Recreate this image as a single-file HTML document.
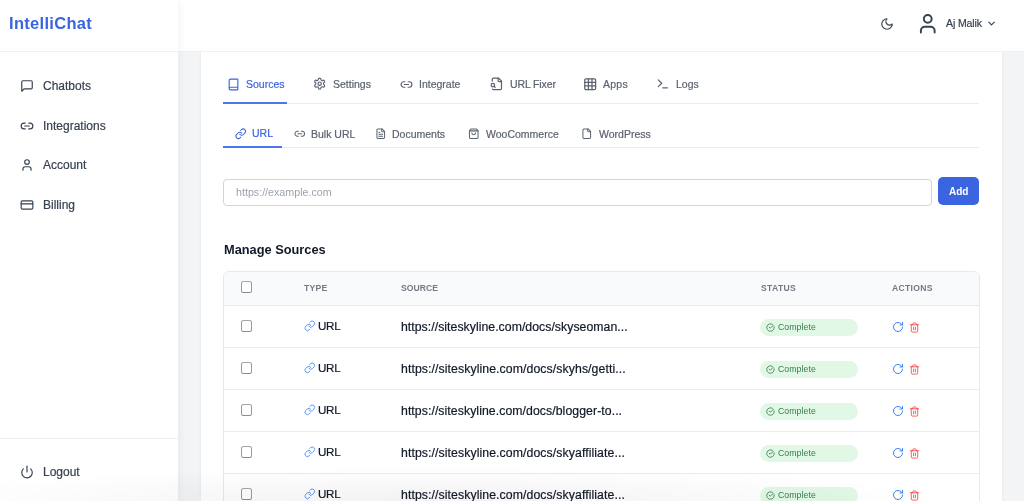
<!DOCTYPE html><html><head><meta charset="utf-8"><style>
*{box-sizing:border-box;margin:0;padding:0}
html,body{width:1024px;height:501px;overflow:hidden;font-family:"Liberation Sans",sans-serif;background:#f3f4f6;color:#374151;position:relative}
.t{position:absolute;white-space:nowrap;line-height:1.2;will-change:transform}
.ic{position:absolute;overflow:visible}
.hl{position:absolute;height:1px;background:#eaebee}
.bar{position:absolute;height:2px;background:#4d77e8}
#sidebar{position:absolute;left:0;top:0;width:178px;height:501px;background:#fff;box-shadow:2px 0 8px rgba(0,0,0,0.045);z-index:3}
#sidebar .hl{background:#eff0f2}
#header{position:absolute;left:178px;top:0;width:846px;height:52px;background:#fff;border-bottom:1px solid #eff0f3;z-index:2}
#header ~ *{z-index:4}
#card{position:absolute;left:201px;top:52px;width:801px;height:460px;background:#fff;box-shadow:0 0 3px rgba(0,0,0,0.07);z-index:1 !important}
#inp{position:absolute;left:223px;top:179px;width:709px;height:27px;border:1px solid #d1d5db;border-radius:4px;background:#fff}
#add{position:absolute;left:938px;top:177px;width:41px;height:28px;border-radius:5px;background:#3a64e0}
#tbl{position:absolute;left:223px;top:271px;width:757px;height:260px;border:1px solid #e8e9eb;border-radius:6px;background:#fff}
#thead{position:absolute;left:224px;top:272px;width:755px;height:33px;background:#f9fafb;border-radius:5px 5px 0 0}
.cb{position:absolute;width:11px;height:11.6px;border:1px solid #999a9c;border-bottom-color:#8a8b8d;border-top-color:#a5a6a8;border-radius:2.5px;background:#fff}
.badge{position:absolute;width:97.5px;height:17px;border-radius:9px;background:#e0f8e5}
#fade{position:absolute;left:0;top:461px;width:1024px;height:40px;background:radial-gradient(ellipse 520px 34px at 430px 100%,rgba(0,0,0,0.05),rgba(0,0,0,0));z-index:10 !important}
</style></head><body>
<div id="sidebar">
<div class="t" style="left:9.3px;top:15px;font-size:16.5px;line-height:16.5px;color:#3a64e0;font-weight:700;letter-spacing:0.3px;">IntelliChat</div>
<div class="hl" style="left:0;top:51px;width:178px"></div>
<svg class="ic" style="left:20px;top:79px;width:14px;height:14px" viewBox="0 0 24 24" fill="none" stroke="#374151" stroke-width="2" stroke-linecap="round" stroke-linejoin="round"><path d="M21 15a2 2 0 0 1-2 2H7l-4 4V5a2 2 0 0 1 2-2h14a2 2 0 0 1 2 2z"/></svg>
<div class="t" style="left:42.5px;top:80px;font-size:12px;line-height:12px;color:#374151;font-weight:400;letter-spacing:0px;-webkit-text-stroke:0.2px currentColor;">Chatbots</div>
<svg class="ic" style="left:20px;top:118.5px;width:14px;height:14px" viewBox="0 0 24 24" fill="none" stroke="#374151" stroke-width="2" stroke-linecap="round" stroke-linejoin="round"><path d="M9 17H7A5 5 0 0 1 7 7h2"/><path d="M15 7h2a5 5 0 1 1 0 10h-2"/><line x1="8" x2="16" y1="12" y2="12"/></svg>
<div class="t" style="left:42.5px;top:120px;font-size:12px;line-height:12px;color:#374151;font-weight:400;letter-spacing:0px;-webkit-text-stroke:0.2px currentColor;">Integrations</div>
<svg class="ic" style="left:20px;top:158px;width:14px;height:14px" viewBox="0 0 24 24" fill="none" stroke="#374151" stroke-width="2" stroke-linecap="round" stroke-linejoin="round"><path d="M19 21v-2a4 4 0 0 0-4-4H9a4 4 0 0 0-4 4v2"/><circle cx="12" cy="7" r="4"/></svg>
<div class="t" style="left:42.5px;top:159px;font-size:12px;line-height:12px;color:#374151;font-weight:400;letter-spacing:0px;-webkit-text-stroke:0.2px currentColor;">Account</div>
<svg class="ic" style="left:20px;top:197.5px;width:14px;height:14px" viewBox="0 0 24 24" fill="none" stroke="#374151" stroke-width="2" stroke-linecap="round" stroke-linejoin="round"><rect width="20" height="14" x="2" y="5" rx="2"/><line x1="2" x2="22" y1="10" y2="10"/></svg>
<div class="t" style="left:42.5px;top:199px;font-size:12px;line-height:12px;color:#374151;font-weight:400;letter-spacing:0px;-webkit-text-stroke:0.2px currentColor;">Billing</div>
<div class="hl" style="left:0;top:438px;width:178px"></div>
<svg class="ic" style="left:20px;top:465px;width:14px;height:14px" viewBox="0 0 24 24" fill="none" stroke="#374151" stroke-width="2" stroke-linecap="round" stroke-linejoin="round"><path d="M12 2v10"/><path d="M18.4 6.6a9 9 0 1 1-12.77.04"/></svg>
<div class="t" style="left:42.5px;top:466px;font-size:12px;line-height:12px;color:#374151;font-weight:400;letter-spacing:0px;-webkit-text-stroke:0.2px currentColor;">Logout</div>
</div>
<div id="header"></div>
<svg class="ic" style="left:880px;top:16.5px;width:14px;height:14px" viewBox="0 0 24 24" fill="none" stroke="#374151" stroke-width="2" stroke-linecap="round" stroke-linejoin="round"><path d="M12 3a6 6 0 0 0 9 9 9 9 0 1 1-9-9Z"/></svg>
<svg class="ic" style="left:916px;top:12.3px;width:23.5px;height:23.5px" viewBox="0 0 24 24" fill="none" stroke="#374151" stroke-width="2" stroke-linecap="round" stroke-linejoin="round"><path d="M19 21v-2a4 4 0 0 0-4-4H9a4 4 0 0 0-4 4v2"/><circle cx="12" cy="7" r="4"/></svg>
<div class="t" style="left:945.5px;top:18px;font-size:10.5px;line-height:10.5px;color:#374151;font-weight:400;letter-spacing:-0.12px;-webkit-text-stroke:0.2px currentColor;">Aj Malik</div>
<svg class="ic" style="left:985.5px;top:18px;width:11px;height:11px" viewBox="0 0 24 24" fill="none" stroke="#374151" stroke-width="2.5" stroke-linecap="round" stroke-linejoin="round"><path d="m6 9 6 6 6-6"/></svg>
<div id="card"></div>
<svg class="ic" style="left:226.5px;top:77.5px;width:13px;height:13px" viewBox="0 0 24 24" fill="none" stroke="#3a64e0" stroke-width="2.1" stroke-linecap="round" stroke-linejoin="round"><path d="M4 19.5v-15A2.5 2.5 0 0 1 6.5 2H19a1 1 0 0 1 1 1v18a1 1 0 0 1-1 1H6.5a1 1 0 0 1 0-5H20"/></svg>
<div class="t" style="left:246px;top:79px;font-size:10.5px;line-height:10.5px;color:#3a64e0;font-weight:400;letter-spacing:0px;-webkit-text-stroke:0.2px currentColor;">Sources</div>
<svg class="ic" style="left:313.2px;top:77.2px;width:13.3px;height:13.3px" viewBox="0 0 24 24" fill="none" stroke="#5b6270" stroke-width="2.1" stroke-linecap="round" stroke-linejoin="round"><path d="M12.22 2h-.44a2 2 0 0 0-2 2v.18a2 2 0 0 1-1 1.73l-.43.25a2 2 0 0 1-2 0l-.15-.08a2 2 0 0 0-2.73.73l-.22.38a2 2 0 0 0 .73 2.73l.15.1a2 2 0 0 1 1 1.72v.51a2 2 0 0 1-1 1.74l-.15.09a2 2 0 0 0-.73 2.730l.22.38a2 2 0 0 0 2.73.73l.15-.08a2 2 0 0 1 2 0l.43.25a2 2 0 0 1 1 1.73V20a2 2 0 0 0 2 2h.44a2 2 0 0 0 2-2v-.18a2 2 0 0 1 1-1.73l.43-.25a2 2 0 0 1 2 0l.15.08a2 2 0 0 0 2.73-.73l.22-.39a2 2 0 0 0-.73-2.73l-.15-.08a2 2 0 0 1-1-1.74v-.5a2 2 0 0 1 1-1.74l.15-.09a2 2 0 0 0 .73-2.73l-.22-.38a2 2 0 0 0-2.73-.73l-.15.08a2 2 0 0 1-2 0l-.43-.25a2 2 0 0 1-1-1.73V4a2 2 0 0 0-2-2z"/><circle cx="12" cy="12" r="3"/></svg>
<div class="t" style="left:332.5px;top:79px;font-size:10.5px;line-height:10.5px;color:#5b6270;font-weight:400;letter-spacing:0px;-webkit-text-stroke:0.2px currentColor;">Settings</div>
<svg class="ic" style="left:400px;top:77.6px;width:13px;height:13px" viewBox="0 0 24 24" fill="none" stroke="#5b6270" stroke-width="2.1" stroke-linecap="round" stroke-linejoin="round"><path d="M9 17H7A5 5 0 0 1 7 7h2"/><path d="M15 7h2a5 5 0 1 1 0 10h-2"/><line x1="8" x2="16" y1="12" y2="12"/></svg>
<div class="t" style="left:419px;top:79px;font-size:10.5px;line-height:10.5px;color:#5b6270;font-weight:400;letter-spacing:0px;-webkit-text-stroke:0.2px currentColor;">Integrate</div>
<svg class="ic" style="left:489.8px;top:77px;width:13.8px;height:13.8px" viewBox="0 0 24 24" fill="none" stroke="#5b6270" stroke-width="2.1" stroke-linecap="round" stroke-linejoin="round"><path d="M14 2v4a2 2 0 0 0 2 2h4"/><path d="M4.268 21a2 2 0 0 0 1.727 1H18a2 2 0 0 0 2-2V7l-5-5H6a2 2 0 0 0-2 2v3"/><path d="m9 18-1.5-1.5"/><circle cx="5" cy="14" r="3"/></svg>
<div class="t" style="left:510px;top:79px;font-size:10.5px;line-height:10.5px;color:#5b6270;font-weight:400;letter-spacing:-0.12px;-webkit-text-stroke:0.2px currentColor;">URL Fixer</div>
<svg class="ic" style="left:582.9px;top:76.9px;width:14.4px;height:14.4px" viewBox="0 0 24 24" fill="none" stroke="#5b6270" stroke-width="2.1" stroke-linecap="round" stroke-linejoin="round"><rect width="18" height="18" x="3" y="3" rx="2"/><path d="M3 9h18"/><path d="M3 15h18"/><path d="M9 3v18"/><path d="M15 3v18"/></svg>
<div class="t" style="left:603px;top:79px;font-size:10.5px;line-height:10.5px;color:#5b6270;font-weight:400;letter-spacing:0.25px;-webkit-text-stroke:0.2px currentColor;">Apps</div>
<svg class="ic" style="left:655.8px;top:77.3px;width:13.7px;height:13.7px" viewBox="0 0 24 24" fill="none" stroke="#5b6270" stroke-width="2.1" stroke-linecap="round" stroke-linejoin="round"><polyline points="4 17 10 11 4 5"/><line x1="12" x2="20" y1="19" y2="19"/></svg>
<div class="t" style="left:676px;top:79px;font-size:10.5px;line-height:10.5px;color:#5b6270;font-weight:400;letter-spacing:0px;-webkit-text-stroke:0.2px currentColor;">Logs</div>
<div class="hl" style="left:223px;top:103px;width:756px"></div>
<div class="bar" style="left:223px;top:101.5px;width:64px"></div>
<svg class="ic" style="left:234.5px;top:127.5px;width:11.5px;height:11.5px" viewBox="0 0 24 24" fill="none" stroke="#3a64e0" stroke-width="2.1" stroke-linecap="round" stroke-linejoin="round"><path d="M10 13a5 5 0 0 0 7.54.54l3-3a5 5 0 0 0-7.07-7.07l-1.72 1.71"/><path d="M14 11a5 5 0 0 0-7.54-.54l-3 3a5 5 0 0 0 7.07 7.07l1.71-1.71"/></svg>
<div class="t" style="left:251.5px;top:128px;font-size:10.5px;line-height:10.5px;color:#3a64e0;font-weight:400;letter-spacing:0px;-webkit-text-stroke:0.2px currentColor;">URL</div>
<svg class="ic" style="left:293.7px;top:128.2px;width:11.5px;height:11.5px" viewBox="0 0 24 24" fill="none" stroke="#5b6270" stroke-width="2.1" stroke-linecap="round" stroke-linejoin="round"><path d="M9 17H7A5 5 0 0 1 7 7h2"/><path d="M15 7h2a5 5 0 1 1 0 10h-2"/><line x1="8" x2="16" y1="12" y2="12"/></svg>
<div class="t" style="left:310.5px;top:129px;font-size:10.5px;line-height:10.5px;color:#5b6270;font-weight:400;letter-spacing:0px;-webkit-text-stroke:0.2px currentColor;">Bulk URL</div>
<svg class="ic" style="left:375px;top:128px;width:11.5px;height:11.5px" viewBox="0 0 24 24" fill="none" stroke="#5b6270" stroke-width="2.1" stroke-linecap="round" stroke-linejoin="round"><path d="M15 2H6a2 2 0 0 0-2 2v16a2 2 0 0 0 2 2h12a2 2 0 0 0 2-2V7Z"/><path d="M14 2v4a2 2 0 0 0 2 2h4"/><path d="M10 9H8"/><path d="M16 13H8"/><path d="M16 17H8"/></svg>
<div class="t" style="left:392px;top:129px;font-size:10.5px;line-height:10.5px;color:#5b6270;font-weight:400;letter-spacing:0px;-webkit-text-stroke:0.2px currentColor;">Documents</div>
<svg class="ic" style="left:468px;top:128.2px;width:11.5px;height:11.5px" viewBox="0 0 24 24" fill="none" stroke="#5b6270" stroke-width="2.1" stroke-linecap="round" stroke-linejoin="round"><path d="M6 2 3 6v14a2 2 0 0 0 2 2h14a2 2 0 0 0 2-2V6l-3-4Z"/><path d="M3 6h18"/><path d="M16 10a4 4 0 0 1-8 0"/></svg>
<div class="t" style="left:486px;top:129px;font-size:10.5px;line-height:10.5px;color:#5b6270;font-weight:400;letter-spacing:0px;-webkit-text-stroke:0.2px currentColor;">WooCommerce</div>
<svg class="ic" style="left:580.8px;top:128px;width:11.5px;height:11.5px" viewBox="0 0 24 24" fill="none" stroke="#5b6270" stroke-width="2.1" stroke-linecap="round" stroke-linejoin="round"><path d="M15 2H6a2 2 0 0 0-2 2v16a2 2 0 0 0 2 2h12a2 2 0 0 0 2-2V7Z"/><path d="M14 2v4a2 2 0 0 0 2 2h4"/></svg>
<div class="t" style="left:598.5px;top:129px;font-size:10.5px;line-height:10.5px;color:#5b6270;font-weight:400;letter-spacing:0px;-webkit-text-stroke:0.2px currentColor;">WordPress</div>
<div class="hl" style="left:223px;top:147px;width:756px"></div>
<div class="bar" style="left:223px;top:145.5px;width:59px"></div>
<div id="inp"></div>
<div class="t" style="left:235.5px;top:187px;font-size:10.7px;line-height:10.7px;color:#9ca3af;font-weight:400;letter-spacing:0px;">https://example.com</div>
<div id="add"></div>
<div class="t" style="left:949px;top:187px;font-size:10px;line-height:10px;color:#ffffff;font-weight:700;letter-spacing:0px;">Add</div>
<div class="t" style="left:223.5px;top:244px;font-size:12.8px;line-height:12.8px;color:#111827;font-weight:700;letter-spacing:0px;">Manage Sources</div>
<div id="tbl"></div>
<div id="thead"></div>
<div class="cb" style="left:241px;top:281px"></div>
<div class="t" style="left:304px;top:284px;font-size:8.6px;line-height:8.6px;color:#737985;font-weight:700;letter-spacing:0.25px;">TYPE</div>
<div class="t" style="left:401px;top:284px;font-size:8.6px;line-height:8.6px;color:#737985;font-weight:700;letter-spacing:0.05px;">SOURCE</div>
<div class="t" style="left:760.5px;top:284px;font-size:8.6px;line-height:8.6px;color:#737985;font-weight:700;letter-spacing:0.35px;">STATUS</div>
<div class="t" style="left:892px;top:284px;font-size:8.6px;line-height:8.6px;color:#737985;font-weight:700;letter-spacing:0.3px;">ACTIONS</div>
<div class="hl" style="left:224px;top:305px;width:755px"></div>
<div class="cb" style="left:241px;top:320.20px"></div>
<svg class="ic" style="left:303.6px;top:319.79999999999995px;width:11.6px;height:11.6px" viewBox="0 0 24 24" fill="none" stroke="#3b82f6" stroke-width="1.7" stroke-linecap="round" stroke-linejoin="round"><path d="M10 13a5 5 0 0 0 7.54.54l3-3a5 5 0 0 0-7.07-7.07l-1.72 1.71"/><path d="M14 11a5 5 0 0 0-7.54-.54l-3 3a5 5 0 0 0 7.07 7.07l1.71-1.71"/></svg>
<div class="t" style="left:318px;top:320px;font-size:11.6px;line-height:11.6px;color:#111827;font-weight:400;letter-spacing:-0.3px;-webkit-text-stroke:0.2px currentColor;">URL</div>
<div class="t" style="left:401px;top:321px;font-size:12.27px;line-height:12.27px;color:#111827;font-weight:400;letter-spacing:0.04px;-webkit-text-stroke:0.2px currentColor;">https://siteskyline.com/docs/skyseoman...</div>
<div class="badge" style="left:760px;top:318.60px"></div>
<svg class="ic" style="left:765.5px;top:323.4px;width:9px;height:9px" viewBox="0 0 24 24" fill="none" stroke="#3d7a50" stroke-width="2.2" stroke-linecap="round" stroke-linejoin="round"><path d="M21.801 10A10 10 0 1 1 17 3.335"/><path d="m8.5 11 3 3 8-8"/></svg>
<div class="t" style="left:777.5px;top:323px;font-size:8.75px;line-height:8.75px;color:#3a7a4e;font-weight:400;letter-spacing:0.05px;">Complete</div>
<svg class="ic" style="left:891.5px;top:321.4px;width:12px;height:12px" viewBox="0 0 24 24" fill="none" stroke="#3b82f6" stroke-width="2" stroke-linecap="round" stroke-linejoin="round"><path d="M21 12a9 9 0 1 1-9-9c2.52 0 4.93 1 6.74 2.74L21 8"/><path d="M21 3v5h-5"/></svg>
<svg class="ic" style="left:909px;top:322.4px;width:11px;height:11px" viewBox="0 0 24 24" fill="none" stroke="#ef4444" stroke-width="1.8" stroke-linecap="round" stroke-linejoin="round"><path d="M3 6h18"/><path d="M19 6v14c0 1-1 2-2 2H7c-1 0-2-1-2-2V6"/><path d="M8 6V4c0-1 1-2 2-2h4c1 0 2 1 2 2v2"/><line x1="10" x2="10" y1="11" y2="17"/><line x1="14" x2="14" y1="11" y2="17"/></svg>
<div class="hl" style="left:224px;top:347px;width:755px"></div>
<div class="cb" style="left:241px;top:362.20px"></div>
<svg class="ic" style="left:303.6px;top:361.79999999999995px;width:11.6px;height:11.6px" viewBox="0 0 24 24" fill="none" stroke="#3b82f6" stroke-width="1.7" stroke-linecap="round" stroke-linejoin="round"><path d="M10 13a5 5 0 0 0 7.54.54l3-3a5 5 0 0 0-7.07-7.07l-1.72 1.71"/><path d="M14 11a5 5 0 0 0-7.54-.54l-3 3a5 5 0 0 0 7.07 7.07l1.71-1.71"/></svg>
<div class="t" style="left:318px;top:362px;font-size:11.6px;line-height:11.6px;color:#111827;font-weight:400;letter-spacing:-0.3px;-webkit-text-stroke:0.2px currentColor;">URL</div>
<div class="t" style="left:401px;top:363px;font-size:12.27px;line-height:12.27px;color:#111827;font-weight:400;letter-spacing:0.09px;-webkit-text-stroke:0.2px currentColor;">https://siteskyline.com/docs/skyhs/getti...</div>
<div class="badge" style="left:760px;top:360.60px"></div>
<svg class="ic" style="left:765.5px;top:365.4px;width:9px;height:9px" viewBox="0 0 24 24" fill="none" stroke="#3d7a50" stroke-width="2.2" stroke-linecap="round" stroke-linejoin="round"><path d="M21.801 10A10 10 0 1 1 17 3.335"/><path d="m8.5 11 3 3 8-8"/></svg>
<div class="t" style="left:777.5px;top:365px;font-size:8.75px;line-height:8.75px;color:#3a7a4e;font-weight:400;letter-spacing:0.05px;">Complete</div>
<svg class="ic" style="left:891.5px;top:363.4px;width:12px;height:12px" viewBox="0 0 24 24" fill="none" stroke="#3b82f6" stroke-width="2" stroke-linecap="round" stroke-linejoin="round"><path d="M21 12a9 9 0 1 1-9-9c2.52 0 4.93 1 6.74 2.74L21 8"/><path d="M21 3v5h-5"/></svg>
<svg class="ic" style="left:909px;top:364.4px;width:11px;height:11px" viewBox="0 0 24 24" fill="none" stroke="#ef4444" stroke-width="1.8" stroke-linecap="round" stroke-linejoin="round"><path d="M3 6h18"/><path d="M19 6v14c0 1-1 2-2 2H7c-1 0-2-1-2-2V6"/><path d="M8 6V4c0-1 1-2 2-2h4c1 0 2 1 2 2v2"/><line x1="10" x2="10" y1="11" y2="17"/><line x1="14" x2="14" y1="11" y2="17"/></svg>
<div class="hl" style="left:224px;top:389px;width:755px"></div>
<div class="cb" style="left:241px;top:404.20px"></div>
<svg class="ic" style="left:303.6px;top:403.79999999999995px;width:11.6px;height:11.6px" viewBox="0 0 24 24" fill="none" stroke="#3b82f6" stroke-width="1.7" stroke-linecap="round" stroke-linejoin="round"><path d="M10 13a5 5 0 0 0 7.54.54l3-3a5 5 0 0 0-7.07-7.07l-1.72 1.71"/><path d="M14 11a5 5 0 0 0-7.54-.54l-3 3a5 5 0 0 0 7.07 7.07l1.71-1.71"/></svg>
<div class="t" style="left:318px;top:404px;font-size:11.6px;line-height:11.6px;color:#111827;font-weight:400;letter-spacing:-0.3px;-webkit-text-stroke:0.2px currentColor;">URL</div>
<div class="t" style="left:401px;top:405px;font-size:12.27px;line-height:12.27px;color:#111827;font-weight:400;letter-spacing:0.07px;-webkit-text-stroke:0.2px currentColor;">https://siteskyline.com/docs/blogger-to...</div>
<div class="badge" style="left:760px;top:402.60px"></div>
<svg class="ic" style="left:765.5px;top:407.4px;width:9px;height:9px" viewBox="0 0 24 24" fill="none" stroke="#3d7a50" stroke-width="2.2" stroke-linecap="round" stroke-linejoin="round"><path d="M21.801 10A10 10 0 1 1 17 3.335"/><path d="m8.5 11 3 3 8-8"/></svg>
<div class="t" style="left:777.5px;top:407px;font-size:8.75px;line-height:8.75px;color:#3a7a4e;font-weight:400;letter-spacing:0.05px;">Complete</div>
<svg class="ic" style="left:891.5px;top:405.4px;width:12px;height:12px" viewBox="0 0 24 24" fill="none" stroke="#3b82f6" stroke-width="2" stroke-linecap="round" stroke-linejoin="round"><path d="M21 12a9 9 0 1 1-9-9c2.52 0 4.93 1 6.74 2.74L21 8"/><path d="M21 3v5h-5"/></svg>
<svg class="ic" style="left:909px;top:406.4px;width:11px;height:11px" viewBox="0 0 24 24" fill="none" stroke="#ef4444" stroke-width="1.8" stroke-linecap="round" stroke-linejoin="round"><path d="M3 6h18"/><path d="M19 6v14c0 1-1 2-2 2H7c-1 0-2-1-2-2V6"/><path d="M8 6V4c0-1 1-2 2-2h4c1 0 2 1 2 2v2"/><line x1="10" x2="10" y1="11" y2="17"/><line x1="14" x2="14" y1="11" y2="17"/></svg>
<div class="hl" style="left:224px;top:431px;width:755px"></div>
<div class="cb" style="left:241px;top:446.20px"></div>
<svg class="ic" style="left:303.6px;top:445.79999999999995px;width:11.6px;height:11.6px" viewBox="0 0 24 24" fill="none" stroke="#3b82f6" stroke-width="1.7" stroke-linecap="round" stroke-linejoin="round"><path d="M10 13a5 5 0 0 0 7.54.54l3-3a5 5 0 0 0-7.07-7.07l-1.72 1.71"/><path d="M14 11a5 5 0 0 0-7.54-.54l-3 3a5 5 0 0 0 7.07 7.07l1.71-1.71"/></svg>
<div class="t" style="left:318px;top:446px;font-size:11.6px;line-height:11.6px;color:#111827;font-weight:400;letter-spacing:-0.3px;-webkit-text-stroke:0.2px currentColor;">URL</div>
<div class="t" style="left:401px;top:447px;font-size:12.27px;line-height:12.27px;color:#111827;font-weight:400;letter-spacing:0.09px;-webkit-text-stroke:0.2px currentColor;">https://siteskyline.com/docs/skyaffiliate...</div>
<div class="badge" style="left:760px;top:444.60px"></div>
<svg class="ic" style="left:765.5px;top:449.4px;width:9px;height:9px" viewBox="0 0 24 24" fill="none" stroke="#3d7a50" stroke-width="2.2" stroke-linecap="round" stroke-linejoin="round"><path d="M21.801 10A10 10 0 1 1 17 3.335"/><path d="m8.5 11 3 3 8-8"/></svg>
<div class="t" style="left:777.5px;top:449px;font-size:8.75px;line-height:8.75px;color:#3a7a4e;font-weight:400;letter-spacing:0.05px;">Complete</div>
<svg class="ic" style="left:891.5px;top:447.4px;width:12px;height:12px" viewBox="0 0 24 24" fill="none" stroke="#3b82f6" stroke-width="2" stroke-linecap="round" stroke-linejoin="round"><path d="M21 12a9 9 0 1 1-9-9c2.52 0 4.93 1 6.74 2.74L21 8"/><path d="M21 3v5h-5"/></svg>
<svg class="ic" style="left:909px;top:448.4px;width:11px;height:11px" viewBox="0 0 24 24" fill="none" stroke="#ef4444" stroke-width="1.8" stroke-linecap="round" stroke-linejoin="round"><path d="M3 6h18"/><path d="M19 6v14c0 1-1 2-2 2H7c-1 0-2-1-2-2V6"/><path d="M8 6V4c0-1 1-2 2-2h4c1 0 2 1 2 2v2"/><line x1="10" x2="10" y1="11" y2="17"/><line x1="14" x2="14" y1="11" y2="17"/></svg>
<div class="hl" style="left:224px;top:473px;width:755px"></div>
<div class="cb" style="left:241px;top:488.20px"></div>
<svg class="ic" style="left:303.6px;top:487.79999999999995px;width:11.6px;height:11.6px" viewBox="0 0 24 24" fill="none" stroke="#3b82f6" stroke-width="1.7" stroke-linecap="round" stroke-linejoin="round"><path d="M10 13a5 5 0 0 0 7.54.54l3-3a5 5 0 0 0-7.07-7.07l-1.72 1.71"/><path d="M14 11a5 5 0 0 0-7.54-.54l-3 3a5 5 0 0 0 7.07 7.07l1.71-1.71"/></svg>
<div class="t" style="left:318px;top:488px;font-size:11.6px;line-height:11.6px;color:#111827;font-weight:400;letter-spacing:-0.3px;-webkit-text-stroke:0.2px currentColor;">URL</div>
<div class="t" style="left:401px;top:489px;font-size:12.27px;line-height:12.27px;color:#111827;font-weight:400;letter-spacing:0.09px;-webkit-text-stroke:0.2px currentColor;">https://siteskyline.com/docs/skyaffiliate...</div>
<div class="badge" style="left:760px;top:486.60px"></div>
<svg class="ic" style="left:765.5px;top:491.4px;width:9px;height:9px" viewBox="0 0 24 24" fill="none" stroke="#3d7a50" stroke-width="2.2" stroke-linecap="round" stroke-linejoin="round"><path d="M21.801 10A10 10 0 1 1 17 3.335"/><path d="m8.5 11 3 3 8-8"/></svg>
<div class="t" style="left:777.5px;top:491px;font-size:8.75px;line-height:8.75px;color:#3a7a4e;font-weight:400;letter-spacing:0.05px;">Complete</div>
<svg class="ic" style="left:891.5px;top:489.4px;width:12px;height:12px" viewBox="0 0 24 24" fill="none" stroke="#3b82f6" stroke-width="2" stroke-linecap="round" stroke-linejoin="round"><path d="M21 12a9 9 0 1 1-9-9c2.52 0 4.93 1 6.74 2.74L21 8"/><path d="M21 3v5h-5"/></svg>
<svg class="ic" style="left:909px;top:490.4px;width:11px;height:11px" viewBox="0 0 24 24" fill="none" stroke="#ef4444" stroke-width="1.8" stroke-linecap="round" stroke-linejoin="round"><path d="M3 6h18"/><path d="M19 6v14c0 1-1 2-2 2H7c-1 0-2-1-2-2V6"/><path d="M8 6V4c0-1 1-2 2-2h4c1 0 2 1 2 2v2"/><line x1="10" x2="10" y1="11" y2="17"/><line x1="14" x2="14" y1="11" y2="17"/></svg>
<div id="fade"></div>
</body></html>
